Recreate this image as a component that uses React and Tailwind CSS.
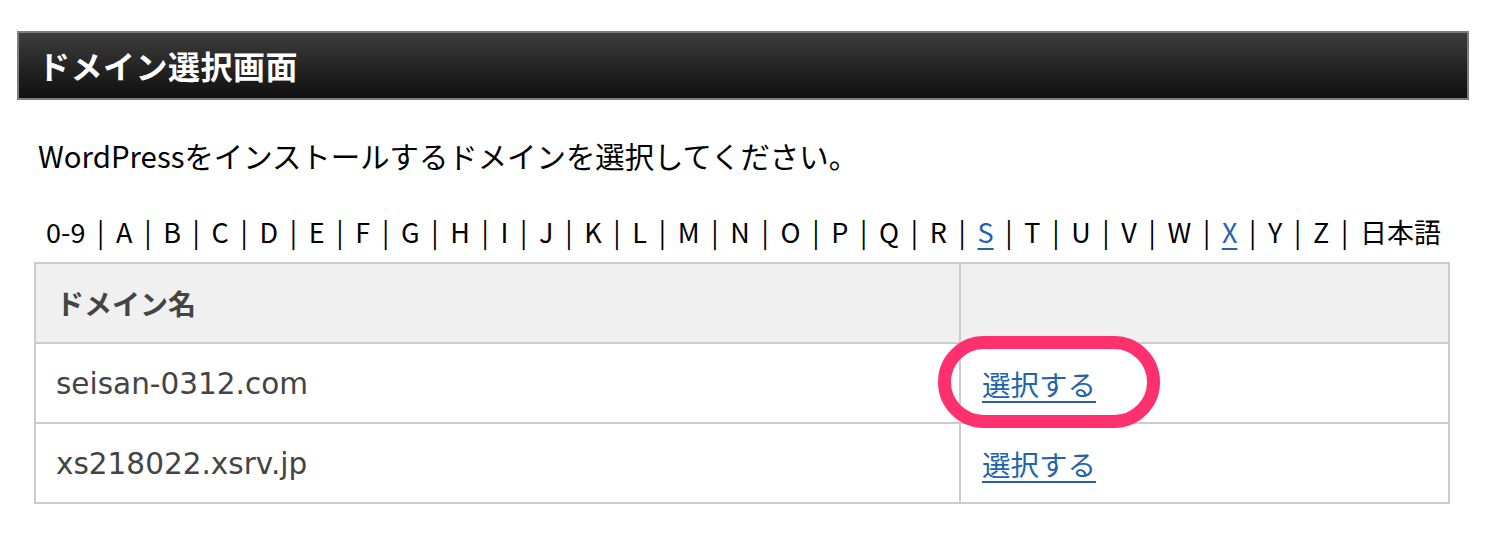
import React from 'react';

const letters = ['0-9', 'A', 'B', 'C', 'D', 'E', 'F', 'G', 'H', 'I', 'J', 'K', 'L', 'M', 'N', 'O', 'P', 'Q', 'R', 'S', 'T', 'U', 'V', 'W', 'X', 'Y', 'Z', '日本語'];
const linked = ['S', 'X'];

const domains = ['seisan-0312.com', 'xs218022.xsrv.jp'];

const jp = { fontFamily: '"Noto Sans CJK JP", "Noto Sans", sans-serif' };
const verdana = { fontFamily: '"DejaVu Sans", "Noto Sans CJK JP", sans-serif' };

export default function App() {
    return (
        <div className="w-[1506px] h-[550px] bg-white pt-[31px] pl-[17px]" style={jp}>
            <div className="w-[1452px]">
                {/* Title bar */}
                <div className="h-[69px] border-2 border-[#7c7c7c] bg-gradient-to-b from-[#3d3d3d] to-[#101010] flex items-center pl-[19px]">
                    <h1 className="text-white font-bold text-[32px] leading-none tracking-[0.5px] -mt-[2px]">ドメイン選択画面</h1>
                </div>

                <p className="mt-[36px] pl-[21px] text-[29.4px] leading-[38px] text-black">
                    WordPressをインストールするドメインを選択してください。
                </p>

                <div className="ml-[17px] w-[1416px]">
                    {/* Alphabet index */}
                    <div className="mt-[36px] mb-[8px] h-[44px] flex items-center justify-end pr-[9px] text-[27px] text-black whitespace-nowrap">
                        {letters.map((l, i) => (
                            <React.Fragment key={l}>
                                {linked.includes(l) ? (
                                    <a className="text-[#2463aa] underline underline-offset-[5px]">{l}</a>
                                ) : (
                                    <span>{l}</span>
                                )}
                                {i < letters.length - 1 && <span className="px-[11.7px]">|</span>}
                            </React.Fragment>
                        ))}
                    </div>

                    {/* Domain table */}
                    <table className="w-full border-collapse border-2 border-[#cccccc]">
                        <thead>
                            <tr className="h-[80px] bg-[#f0f0f0]">
                                <th className="w-[925px] border-2 border-[#cccccc] text-left pl-[20px] text-[28px] font-bold text-[#444]">ドメイン名</th>
                                <th className="border-2 border-[#cccccc]"></th>
                            </tr>
                        </thead>
                        <tbody>
                            {domains.map((d, i) => (
                                <tr key={d} className="h-[80px]">
                                    <td className="border-2 border-[#cccccc] pl-[20px] pt-[2px] text-[29.5px] text-[#444]" style={verdana}>{d}</td>
                                    <td className="border-2 border-[#cccccc] pl-[21px] pt-[2px] relative">
                                        <a className="text-[28.5px] text-[#2463aa] underline underline-offset-[5px] cursor-pointer">選択する</a>
                                        {i === 0 && (
                                            <div className="absolute left-[-23px] top-[-8px] w-[222px] h-[92px] rounded-[46px] border-[13px] border-[#ff306e] pointer-events-none" />
                                        )}
                                    </td>
                                </tr>
                            ))}
                        </tbody>
                    </table>
                </div>
            </div>
        </div>
    );
}
